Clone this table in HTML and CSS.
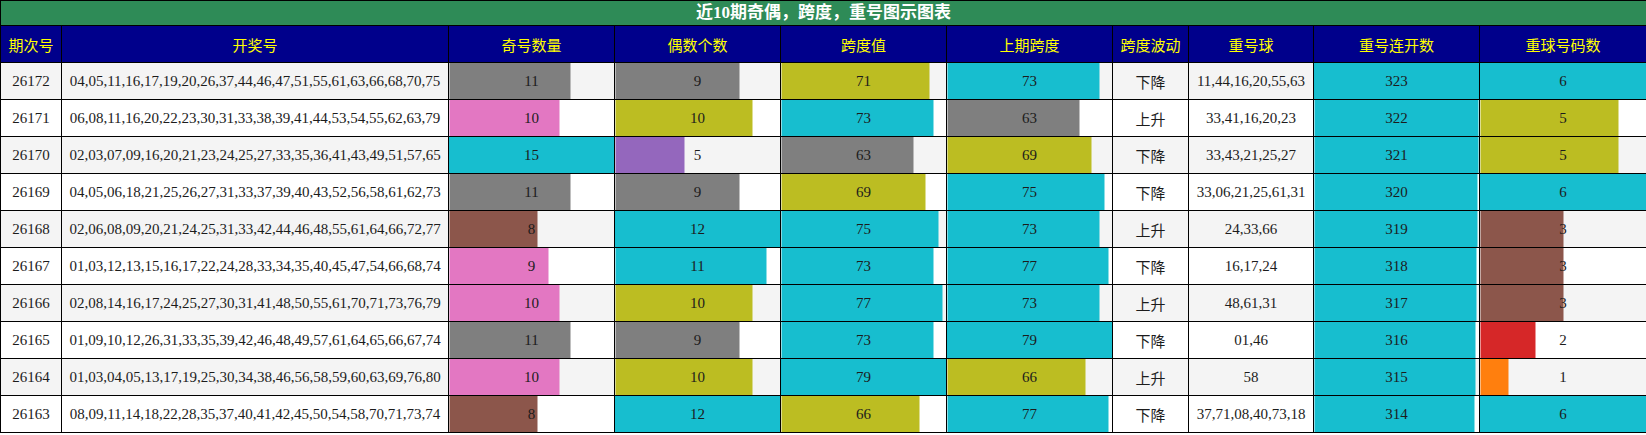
FILE: index.html
```html
<!DOCTYPE html>
<html lang="zh">
<head>
<meta charset="utf-8">
<title>近10期奇偶，跨度，重号图示图表</title>
<link rel="stylesheet" href="styles.css">
</head>
<body>
<table class="chart">
<colgroup>
<col class="w-issue"><col class="w-nums"><col class="w-bar"><col class="w-bar"><col class="w-bar"><col class="w-bar"><col class="w-trend"><col class="w-rep"><col class="w-bar"><col class="w-last">
</colgroup>
<thead>
<tr class="title"><th colspan="10">近10期奇偶，跨度，重号图示图表</th></tr>
<tr class="head"><th>期次号</th><th>开奖号</th><th>奇号数量</th><th>偶数个数</th><th>跨度值</th><th>上期跨度</th><th>跨度波动</th><th>重号球</th><th>重号连开数</th><th>重球号码数</th></tr>
</thead>
<tbody>
<tr><td>26172</td><td>04,05,11,16,17,19,20,26,37,44,46,47,51,55,61,63,66,68,70,75</td><td class="bar c-gray" style="--w:73.33%">11</td><td class="bar c-gray" style="--w:75%">9</td><td class="bar c-olive" style="--w:89.87%">71</td><td class="bar c-cyan" style="--w:92.41%">73</td><td class="cjk">下降</td><td>11,44,16,20,55,63</td><td class="bar c-cyan" style="--w:100%">323</td><td class="bar c-cyan" style="--w:100%">6</td></tr>
<tr><td>26171</td><td>06,08,11,16,20,22,23,30,31,33,38,39,41,44,53,54,55,62,63,79</td><td class="bar c-pink" style="--w:66.67%">10</td><td class="bar c-olive" style="--w:83.33%">10</td><td class="bar c-cyan" style="--w:92.41%">73</td><td class="bar c-gray" style="--w:79.75%">63</td><td class="cjk">上升</td><td>33,41,16,20,23</td><td class="bar c-cyan" style="--w:99.69%">322</td><td class="bar c-olive" style="--w:83.33%">5</td></tr>
<tr><td>26170</td><td>02,03,07,09,16,20,21,23,24,25,27,33,35,36,41,43,49,51,57,65</td><td class="bar c-cyan" style="--w:100%">15</td><td class="bar c-purple" style="--w:41.67%">5</td><td class="bar c-gray" style="--w:79.75%">63</td><td class="bar c-olive" style="--w:87.34%">69</td><td class="cjk">下降</td><td>33,43,21,25,27</td><td class="bar c-cyan" style="--w:99.38%">321</td><td class="bar c-olive" style="--w:83.33%">5</td></tr>
<tr><td>26169</td><td>04,05,06,18,21,25,26,27,31,33,37,39,40,43,52,56,58,61,62,73</td><td class="bar c-gray" style="--w:73.33%">11</td><td class="bar c-gray" style="--w:75%">9</td><td class="bar c-olive" style="--w:87.34%">69</td><td class="bar c-cyan" style="--w:94.94%">75</td><td class="cjk">下降</td><td>33,06,21,25,61,31</td><td class="bar c-cyan" style="--w:99.07%">320</td><td class="bar c-cyan" style="--w:100%">6</td></tr>
<tr><td>26168</td><td>02,06,08,09,20,21,24,25,31,33,42,44,46,48,55,61,64,66,72,77</td><td class="bar c-brown" style="--w:53.33%">8</td><td class="bar c-cyan" style="--w:100%">12</td><td class="bar c-cyan" style="--w:94.94%">75</td><td class="bar c-cyan" style="--w:92.41%">73</td><td class="cjk">上升</td><td>24,33,66</td><td class="bar c-cyan" style="--w:98.76%">319</td><td class="bar c-brown" style="--w:50%">3</td></tr>
<tr><td>26167</td><td>01,03,12,13,15,16,17,22,24,28,33,34,35,40,45,47,54,66,68,74</td><td class="bar c-pink" style="--w:60%">9</td><td class="bar c-cyan" style="--w:91.67%">11</td><td class="bar c-cyan" style="--w:92.41%">73</td><td class="bar c-cyan" style="--w:97.47%">77</td><td class="cjk">下降</td><td>16,17,24</td><td class="bar c-cyan" style="--w:98.45%">318</td><td class="bar c-brown" style="--w:50%">3</td></tr>
<tr><td>26166</td><td>02,08,14,16,17,24,25,27,30,31,41,48,50,55,61,70,71,73,76,79</td><td class="bar c-pink" style="--w:66.67%">10</td><td class="bar c-olive" style="--w:83.33%">10</td><td class="bar c-cyan" style="--w:97.47%">77</td><td class="bar c-cyan" style="--w:92.41%">73</td><td class="cjk">上升</td><td>48,61,31</td><td class="bar c-cyan" style="--w:98.14%">317</td><td class="bar c-brown" style="--w:50%">3</td></tr>
<tr><td>26165</td><td>01,09,10,12,26,31,33,35,39,42,46,48,49,57,61,64,65,66,67,74</td><td class="bar c-gray" style="--w:73.33%">11</td><td class="bar c-gray" style="--w:75%">9</td><td class="bar c-cyan" style="--w:92.41%">73</td><td class="bar c-cyan" style="--w:100%">79</td><td class="cjk">下降</td><td>01,46</td><td class="bar c-cyan" style="--w:97.83%">316</td><td class="bar c-red" style="--w:33.33%">2</td></tr>
<tr><td>26164</td><td>01,03,04,05,13,17,19,25,30,34,38,46,56,58,59,60,63,69,76,80</td><td class="bar c-pink" style="--w:66.67%">10</td><td class="bar c-olive" style="--w:83.33%">10</td><td class="bar c-cyan" style="--w:100%">79</td><td class="bar c-olive" style="--w:83.54%">66</td><td class="cjk">上升</td><td>58</td><td class="bar c-cyan" style="--w:97.52%">315</td><td class="bar c-orange" style="--w:16.67%">1</td></tr>
<tr><td>26163</td><td>08,09,11,14,18,22,28,35,37,40,41,42,45,50,54,58,70,71,73,74</td><td class="bar c-brown" style="--w:53.33%">8</td><td class="bar c-cyan" style="--w:100%">12</td><td class="bar c-olive" style="--w:83.54%">66</td><td class="bar c-cyan" style="--w:97.47%">77</td><td class="cjk">下降</td><td>37,71,08,40,73,18</td><td class="bar c-cyan" style="--w:97.21%">314</td><td class="bar c-cyan" style="--w:100%">6</td></tr>
</tbody>
</table>
</body>
</html>
```
FILE: styles.css
```css
html, body {
  margin: 0;
  padding: 0;
  background: #ffffff;
}

.chart {
  border-collapse: collapse;
  table-layout: fixed;
  width: 1646px;
  font-family: "Liberation Serif", "Noto Sans CJK SC", serif;
  font-size: 15px;
  color: #1c1c1c;
}

.w-issue { width: 61px; }
.w-nums { width: 387px; }
.w-bar { width: 166px; }
.w-trend { width: 76px; }
.w-rep { width: 125px; }
.w-last { width: 167px; }

.chart th,
.chart td {
  border: 1px solid #000000;
  padding: 0;
  text-align: center;
  vertical-align: middle;
  white-space: nowrap;
}

.title th {
  height: 24px;
  background: #2e8b57;
  color: #ffffff;
  font-weight: bold;
  font-size: 17px;
  line-height: 24px;
}

.head th {
  height: 36px;
  background: #00008b;
  color: #ffff00;
  font-weight: normal;
  font-family: "Noto Sans CJK SC", sans-serif;
  font-size: 15px;
}

.chart tbody td {
  height: 36px;
}

.chart tbody tr:nth-child(odd) {
  background: #f4f4f4;
}

.chart tbody tr:nth-child(even) {
  background: #ffffff;
}

.cjk {
  font-family: "Noto Sans CJK SC", sans-serif;
}

.bar {
  background: linear-gradient(to right, var(--c) 0, var(--c) var(--w), transparent var(--w));
}

.c-cyan { --c: #17becf; }
.c-olive { --c: #bcbd22; }
.c-gray { --c: #7f7f7f; }
.c-pink { --c: #e377c2; }
.c-brown { --c: #8c564b; }
.c-purple { --c: #9467bd; }
.c-red { --c: #d62728; }
.c-orange { --c: #ff7f0e; }
```
